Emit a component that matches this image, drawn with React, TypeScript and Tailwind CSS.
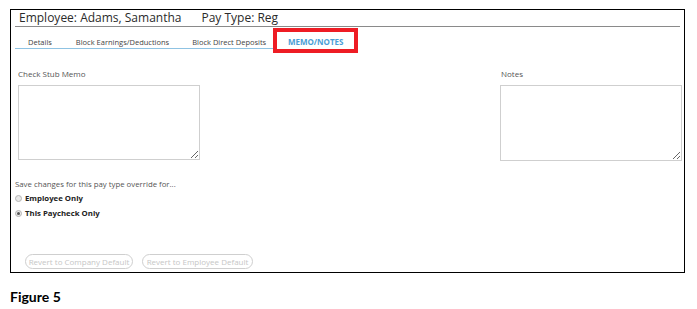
import React from "react";

function Radio({ checked }: { checked?: boolean }) {
  return (
    <span className="flex h-[7px] w-[7px] items-center justify-center rounded-full border border-[#b5b5b5] bg-[#e9e9e9]">
      {checked && <span className="h-[3px] w-[3px] rounded-full bg-[#555]" />}
    </span>
  );
}

export default function App() {
  return (
    <div className="h-[309px] w-[697px] bg-white pl-[10px] pt-[9px] font-['Open_Sans',sans-serif] text-[#333]">
      <div className="flex h-[264px] w-[675px] flex-col border-[1.5px] border-black">
        <div className="mx-[4px] flex h-[17px] items-end gap-[20px] border-b border-[#8a8a8a] pl-[4px] text-[12px] leading-[17px] text-[#2b2b2b]">
          <span>Employee: Adams, Samantha</span>
          <span>Pay Type: Reg</span>
        </div>

        <div className="ml-[4px] mt-[1px] flex items-start text-[7.5px]">
          <div className="flex h-[21px] items-end border-b border-[#8fc3e3] pb-[1px] pr-[7px] leading-[10px] text-[#444]">
            <span className="pl-[13px] pr-[12px]">Details</span>
            <span className="px-[12px]">Block Earnings/Deductions</span>
            <span className="pl-[11px]">Block Direct Deposits</span>
          </div>
          <div className="flex h-[25px] w-[85px] items-center justify-center border-[4px] border-[#ee1c24] pt-[2px] text-[8px] font-bold text-[#4a9ed6]">
            MEMO/NOTES
          </div>
        </div>

        <div className="mt-[15px] flex justify-between pl-[7px] pr-[2px] text-[8px] text-[#555]">
          <div className="flex flex-col">
            <span className="h-[17px]">Check Stub Memo</span>
            <textarea
              readOnly
              className="h-[75px] w-[182px] border border-[#cfcfcf] bg-white outline-none"
            />
          </div>
          <div className="flex flex-col">
            <span className="h-[17px] pl-[1px]">Notes</span>
            <textarea
              readOnly
              className="h-[76px] w-[182px] border border-[#cfcfcf] bg-white outline-none"
            />
          </div>
        </div>

        <div className="mt-[18px] flex flex-col pl-[4px] text-[7.8px]">
          <span className="h-[12px] text-[#555]">Save changes for this pay type override for...</span>
          <div className="flex h-[15px] items-center gap-[3px] font-bold text-[#222]">
            <Radio />
            <span>Employee Only</span>
          </div>
          <div className="flex h-[15px] items-center gap-[3px] font-bold text-[#222]">
            <Radio checked />
            <span>This Paycheck Only</span>
          </div>
        </div>

        <div className="mt-auto mb-[3px] flex gap-[9px] pl-[14px]">
          <button className="h-[15px] w-[108px] rounded-full border border-[#cfcfcf] text-[8px] leading-[13px] text-[#c6c6c6]">
            Revert to Company Default
          </button>
          <button className="h-[15px] w-[111px] rounded-full border border-[#cfcfcf] text-[8px] leading-[13px] text-[#c6c6c6]">
            Revert to Employee Default
          </button>
        </div>
      </div>

      <div className="mt-[13px] font-['Lato',sans-serif] text-[14px] font-bold text-black">Figure 5</div>
    </div>
  );
}
